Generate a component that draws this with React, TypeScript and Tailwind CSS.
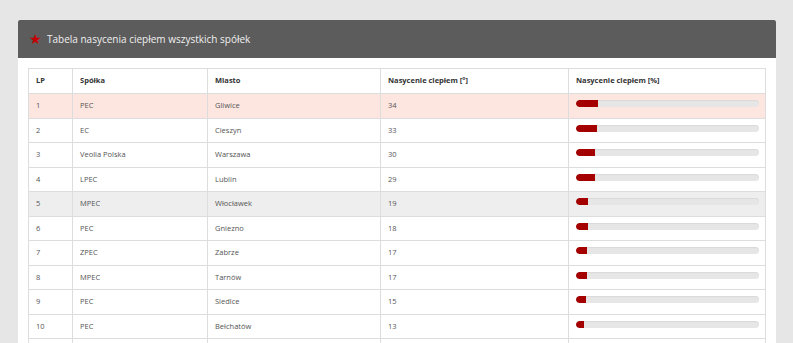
import React from 'react';

// Heat saturation ranking table (all companies)
interface Row {
  lp: number;
  company: string;
  city: string;
  value: number;
  highlight?: 'active' | 'hover';
}

const ROWS: Row[] = [
  { lp: 1, company: 'PEC', city: 'Gliwice', value: 34, highlight: 'active' },
  { lp: 2, company: 'EC', city: 'Cieszyn', value: 33 },
  { lp: 3, company: 'Veolia Polska', city: 'Warszawa', value: 30 },
  { lp: 4, company: 'LPEC', city: 'Lublin', value: 29 },
  { lp: 5, company: 'MPEC', city: 'Włocławek', value: 19, highlight: 'hover' },
  { lp: 6, company: 'PEC', city: 'Gniezno', value: 18 },
  { lp: 7, company: 'ZPEC', city: 'Zabrze', value: 17 },
  { lp: 8, company: 'MPEC', city: 'Tarnów', value: 17 },
  { lp: 9, company: 'PEC', city: 'Siedlce', value: 15 },
  { lp: 10, company: 'PEC', city: 'Bełchatów', value: 13 },
];

const font = { fontFamily: '"Open Sans", "Noto Sans", sans-serif' };

function Bar({ value }: { value: number }) {
  return (
    <div className="h-[7px] w-full rounded-full bg-[#e6e6e6] shadow-[inset_0_1px_1px_rgba(0,0,0,0.06)] overflow-hidden">
      <div className="h-full rounded-l-full bg-[#a40000]" style={{ width: `${value * 0.355}%` }} />
    </div>
  );
}

export default function App() {
  const th = 'border border-[#dddddd] px-[7px] text-left align-middle font-bold text-[7.5px] text-[#333]';
  const td = 'border border-[#dddddd] px-[7px] align-middle text-[7.5px] text-[#555]';

  return (
    <div className="h-[343px] overflow-hidden bg-[#e6e6e6] pt-5 pl-[18px] pr-[17px]" style={font}>
      <div className="bg-white">
        <div className="flex h-[38px] items-center gap-[5px] rounded-t-[2px] bg-[#5c5c5c] pl-[11px]">
          <span className="text-[14px] leading-none text-[#c40000]">★</span>
          <span className="text-[10px] text-[#f0f0f0]">Tabela nasycenia ciepłem wszystkich spółek</span>
        </div>
        <div className="px-[10px] pt-[10px]">
          <table className="w-full table-fixed border-collapse">
            <colgroup>
              <col className="w-[44px]" />
              <col className="w-[135px]" />
              <col className="w-[173px]" />
              <col className="w-[188px]" />
              <col />
            </colgroup>
            <thead>
              <tr className="h-[25px]">
                <th className={th}>LP</th>
                <th className={th}>Spółka</th>
                <th className={th}>Miasto</th>
                <th className={th}>Nasycenie ciepłem [°]</th>
                <th className={th}>Nasycenie ciepłem [%]</th>
              </tr>
            </thead>
            <tbody>
              {ROWS.map(r => (
                <tr
                  key={r.lp}
                  className={
                    r.highlight === 'active'
                      ? 'h-[24.5px] bg-[#fde6e0]'
                      : r.highlight === 'hover'
                      ? 'h-[24.5px] bg-[#eeeeee]'
                      : 'h-[24.5px] bg-white'
                  }
                >
                  <td className={td}>{r.lp}</td>
                  <td className={td}>{r.company}</td>
                  <td className={td}>{r.city}</td>
                  <td className={td}>{r.value}</td>
                  <td className="border border-[#dddddd] pl-[7px] pr-[6px] pt-[6px] align-top">
                    <Bar value={r.value} />
                  </td>
                </tr>
              ))}
              <tr className="h-[24.5px] bg-white">
                <td className={td} />
                <td className={td} />
                <td className={td} />
                <td className={td} />
                <td className={td} />
              </tr>
            </tbody>
          </table>
        </div>
      </div>
    </div>
  );
}
